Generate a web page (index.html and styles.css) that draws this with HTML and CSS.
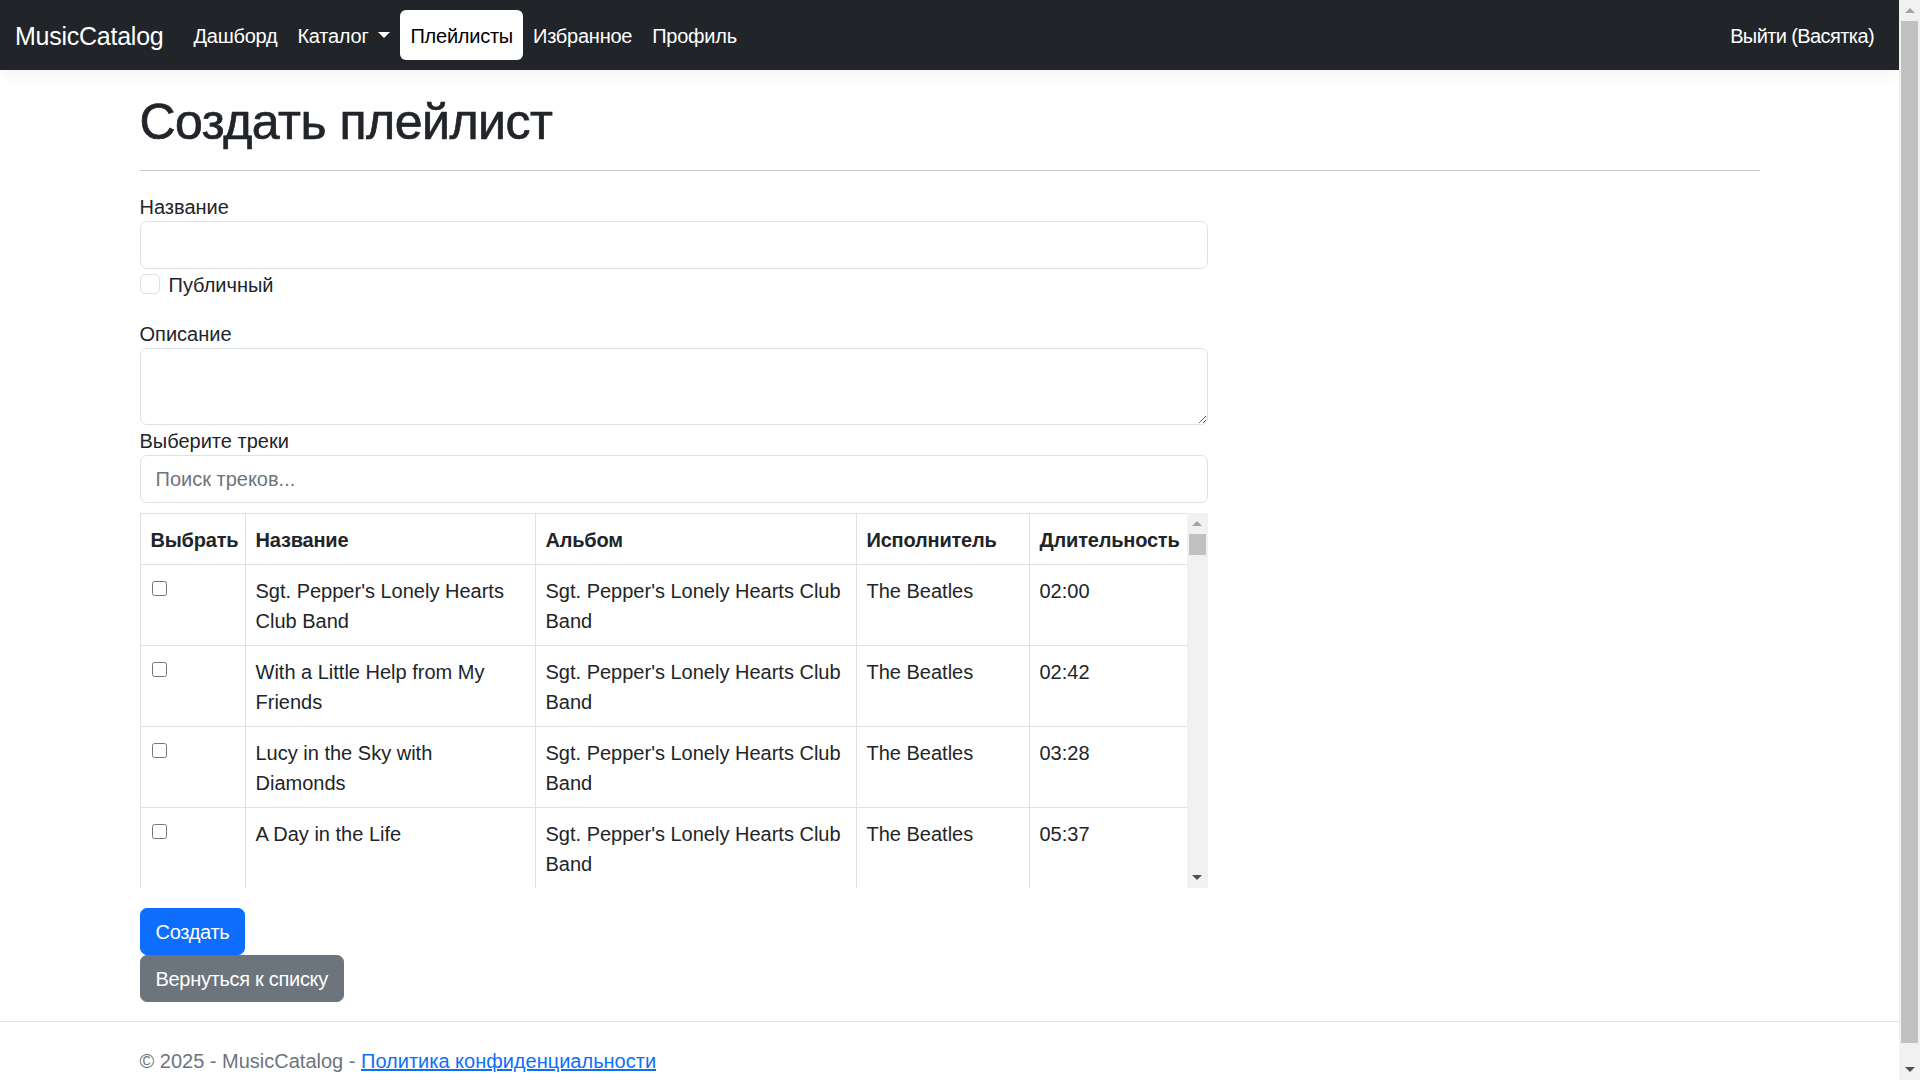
FILE: index.html
```html
<!DOCTYPE html>
<html lang="ru">
<head>
<meta charset="utf-8">
<title>Создать плейлист - MusicCatalog</title>
<link rel="stylesheet" href="styles.css">
</head>
<body>
<div class="page">
  <header>
    <nav class="navbar">
      <a class="brand" href="#">MusicCatalog</a>
      <ul class="nav">
        <li><a class="nav-link" href="#">Дашборд</a></li>
        <li><a class="nav-link dropdown-toggle" href="#">Каталог</a></li>
        <li><a class="nav-link active" href="#">Плейлисты</a></li>
        <li><a class="nav-link" href="#">Избранное</a></li>
        <li><a class="nav-link" href="#">Профиль</a></li>
      </ul>
      <ul class="nav nav-right">
        <li><a class="nav-link nav-logout" href="#">Выйти (Васятка)</a></li>
      </ul>
    </nav>
  </header>

  <div class="container">
    <main class="main">
      <h1 class="title">Создать плейлист</h1>
      <hr class="divider">
      <form class="form">
        <div class="form-group">
          <label class="control-label" for="name">Название</label>
          <input class="form-control" id="name" type="text">
        </div>
        <div class="form-check">
          <input class="form-check-input" id="public" type="checkbox">
          <label class="form-check-label" for="public">Публичный</label>
        </div>
        <div class="form-group">
          <label class="control-label" for="desc">Описание</label>
          <textarea class="form-control form-textarea" id="desc"></textarea>
        </div>
        <div class="form-group">
          <label class="control-label" for="search">Выберите треки</label>
          <input class="form-control" id="search" type="text" placeholder="Поиск треков...">
        </div>

        <div class="tracks">
          <div class="tracks-view">
            <table class="table">
              <colgroup>
                <col class="c-select">
                <col class="c-name">
                <col class="c-album">
                <col class="c-artist">
                <col class="c-duration">
              </colgroup>
              <thead>
                <tr>
                  <th>Выбрать</th>
                  <th>Название</th>
                  <th>Альбом</th>
                  <th>Исполнитель</th>
                  <th>Длительность</th>
                </tr>
              </thead>
              <tbody>
                <tr>
                  <td><input class="row-check" type="checkbox"></td>
                  <td>Sgt. Pepper's Lonely Hearts Club Band</td>
                  <td>Sgt. Pepper's Lonely Hearts Club Band</td>
                  <td>The Beatles</td>
                  <td>02:00</td>
                </tr>
                <tr>
                  <td><input class="row-check" type="checkbox"></td>
                  <td>With a Little Help from My Friends</td>
                  <td>Sgt. Pepper's Lonely Hearts Club Band</td>
                  <td>The Beatles</td>
                  <td>02:42</td>
                </tr>
                <tr>
                  <td><input class="row-check" type="checkbox"></td>
                  <td>Lucy in the Sky with Diamonds</td>
                  <td>Sgt. Pepper's Lonely Hearts Club Band</td>
                  <td>The Beatles</td>
                  <td>03:28</td>
                </tr>
                <tr>
                  <td><input class="row-check" type="checkbox"></td>
                  <td>A Day in the Life</td>
                  <td>Sgt. Pepper's Lonely Hearts Club Band</td>
                  <td>The Beatles</td>
                  <td>05:37</td>
                </tr>
              </tbody>
            </table>
          </div>
          <div class="sbar sbar-inner">
            <div class="sb-btn"><span class="tri-up"></span></div>
            <div class="sb-thumb sb-thumb-inner"></div>
            <div class="sb-fill"></div>
            <div class="sb-btn"><span class="tri-down"></span></div>
          </div>
        </div>

        <div class="actions">
          <button class="btn btn-primary" type="button">Создать</button>
        </div>
        <div>
          <a class="btn btn-secondary" href="#">Вернуться к списку</a>
        </div>
      </form>
    </main>
  </div>

  <footer class="footer">
    <div class="container">© 2025 - MusicCatalog - <a class="footer-link" href="#">Политика конфиденциальности</a></div>
  </footer>
</div>

<div class="sbar sbar-page">
  <div class="sb-btn"><span class="tri-up"></span></div>
  <div class="sb-thumb sb-thumb-page"></div>
  <div class="sb-fill"></div>
  <div class="sb-btn"><span class="tri-down"></span></div>
</div>
</body>
</html>
```

FILE: styles.css
```css
* {
  box-sizing: border-box;
}

html,
body {
  margin: 0;
  height: 100%;
}

body {
  display: flex;
  overflow: hidden;
  background: #fff;
  color: #212529;
  font-family: "Liberation Sans", Arial, sans-serif;
  font-size: 20px;
  line-height: 30px;
}

.page {
  flex: 1;
  min-width: 0;
  height: 100%;
  overflow: hidden;
}

/* ---------- navbar ---------- */
.navbar {
  height: 70px;
  display: flex;
  align-items: center;
  padding: 0 15px;
  background: #212529;
  box-shadow: 0 5px 15px rgba(0, 0, 0, 0.05);
}

.brand {
  margin-right: 20px;
  padding: 7px 0 5px;
  color: #fff;
  font-size: 25px;
  line-height: 37px;
  letter-spacing: -0.01em;
  text-decoration: none;
}

.nav {
  display: flex;
  margin: 0;
  padding: 0;
  list-style: none;
}

.nav-right {
  margin-left: auto;
}

.nav-link {
  display: block;
  padding: 11px 10px 9px;
  border-radius: 6px;
  color: #fff;
  line-height: 30px;
  letter-spacing: -0.012em;
  text-decoration: none;
}

.nav-logout {
  letter-spacing: -0.03em;
}

.nav-link.active {
  background: #fff;
  color: #000;
}

.dropdown-toggle::after {
  content: "";
  display: inline-block;
  margin-left: 10px;
  vertical-align: 5px;
  border-top: 6px solid #fff;
  border-left: 6px solid transparent;
  border-right: 6px solid transparent;
}

/* ---------- main ---------- */
.container {
  width: 1620px;
  margin: 0 auto;
}

.main {
  padding: 20px 0 19px;
}

.title {
  margin: 0 0 10px;
  padding-top: 2px;
  height: 60px;
  font-size: 50px;
  line-height: 60px;
  font-weight: 400;
  letter-spacing: -0.01em;
  -webkit-text-stroke: 0.7px #212529;
}

.divider {
  margin: 20px 0;
  border: 0;
  border-top: 1px solid #c9cacb;
}

.form {
  width: 1068px;
}

.control-label {
  display: block;
  padding-top: 1px;
  height: 30px;
  line-height: 30px;
}

.form-control {
  display: block;
  width: 100%;
  height: 47.5px;
  padding: 8px 15px 7px;
  border: 1px solid #dee2e6;
  border-radius: 7px;
  background: #fff;
  color: #212529;
  font: inherit;
  line-height: 30px;
  outline: none;
}

.form-control::placeholder {
  color: #6c757d;
}

.form-textarea {
  height: 77.5px;
  resize: vertical;
}

.form-check {
  display: flex;
  align-items: flex-start;
  gap: 9px;
  height: 30px;
  margin-bottom: 19px;
}

.form-check-label {
  padding-top: 1px;
}

.form-check-input {
  appearance: none;
  width: 20px;
  height: 20px;
  margin: 5px 0 0;
  border: 1px solid #dee2e6;
  border-radius: 5px;
  background: #fff;
}

/* ---------- tracks table ---------- */
.tracks {
  display: flex;
  height: 375px;
  margin-top: 10px;
}

.tracks-view {
  flex: 1;
  min-width: 0;
  overflow: hidden;
}

.table {
  width: 1047px;
  border-collapse: collapse;
  table-layout: fixed;
}

.c-select { width: 105px; }
.c-name { width: 290px; }
.c-album { width: 321px; }
.c-artist { width: 173px; }
.c-duration { width: 158px; }

.table th,
.table td {
  padding: 11px 10px 9px;
  border: 1px solid #dee2e6;
  text-align: left;
  vertical-align: top;
  line-height: 30px;
}

.table th {
  font-weight: 700;
  letter-spacing: -0.01em;
}

.row-check {
  width: 15px;
  height: 15px;
  margin: 5px 0 0 1px;
  vertical-align: top;
}

/* ---------- scrollbars ---------- */
.sbar {
  width: 21px;
  flex: none;
  display: flex;
  flex-direction: column;
  align-items: center;
  background: #f1f1f1;
}

.sbar-page {
  height: 100%;
}

.sb-btn {
  width: 21px;
  height: 21px;
  flex: none;
  display: flex;
  align-items: center;
  justify-content: center;
}

.sb-thumb {
  width: 17px;
  flex: none;
  background: #c1c1c1;
}

.sb-thumb-page {
  height: 1022px;
}

.sb-thumb-inner {
  height: 21px;
}

.sb-fill {
  flex: 1;
}

.tri-up {
  width: 0;
  height: 0;
  border-left: 5px solid transparent;
  border-right: 5px solid transparent;
  border-bottom: 5px solid #a3a3a3;
}

.tri-down {
  width: 0;
  height: 0;
  border-left: 5px solid transparent;
  border-right: 5px solid transparent;
  border-top: 5px solid #505050;
}

/* ---------- buttons ---------- */
.actions {
  margin-top: 20px;
}

.btn {
  display: inline-block;
  height: 47px;
  padding: 8px 15px 7px;
  border: 1px solid transparent;
  border-radius: 7px;
  color: #fff;
  font: inherit;
  line-height: 30px;
  letter-spacing: -0.015em;
  text-decoration: none;
  cursor: pointer;
}

.btn-primary {
  background: #0d6efd;
  border-color: #0d6efd;
}

.btn-secondary {
  background: #6c757d;
  border-color: #6c757d;
}

/* ---------- footer ---------- */
.footer {
  border-top: 1px solid #dee2e6;
  padding-top: 2px;
  color: #6c757d;
  line-height: 75px;
  white-space: nowrap;
}

.footer-link {
  color: #0d6efd;
  text-decoration: underline;
}
```
